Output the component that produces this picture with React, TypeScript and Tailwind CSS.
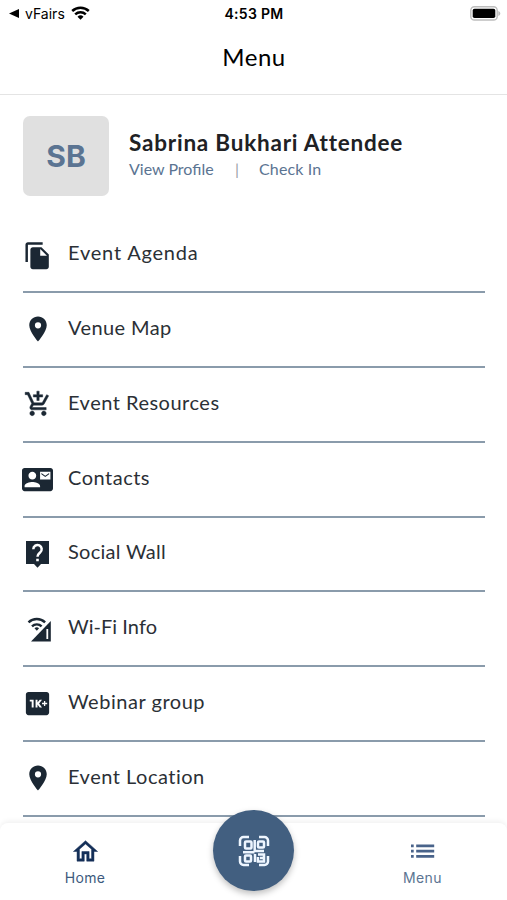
import type { ReactNode } from 'react';
import {
  MdAddShoppingCart,
  MdContactMail,
  MdFileCopy,
  MdLocationOn,
  MdOutlineHome,
  Md1kPlus,
} from 'react-icons/md';

interface MenuItem {
  label: string;
  icon: ReactNode;
  labelClass: string;
}

function HelpIcon() {
  return (
    <svg className="mt-px h-[27px] w-[23px] shrink-0" viewBox="0 0 23 27">
      <path d="M0 0h23v23h-8l-3.5 3.7L8 23H0z" fill="currentColor" />
      <path d="M7.3 8.2a4.2 4.2 0 1 1 6.8 3.3c-1.5 1.2-2.6 1.9-2.6 4.3" fill="none" stroke="#fff" strokeWidth="2.5" />
      <path d="M10.2 17.8h2.6v2.5h-2.6z" fill="#fff" />
    </svg>
  );
}

function CellWifiIcon() {
  return (
    <svg className="mt-[2px] ml-[3px] h-[25px] w-[25px] shrink-0" viewBox="0 0 25 25">
      <path d="M23.8 4v20.5H4z" fill="currentColor" />
      <path d="M20.3 12v10" stroke="#fff" strokeWidth="1.8" />
      <path d="M1.5 5.3a12 12 0 0 1 16.6 0M5 9.3a7 7 0 0 1 9.6 0" fill="none" stroke="currentColor" strokeWidth="2.4" />
      <path d="m9.8 13.7-2.3-2.4a3.4 3.4 0 0 1 4.6 0z" fill="currentColor" />
    </svg>
  );
}

const menuItems: MenuItem[] = [
  { label: 'Event Agenda', icon: <MdFileCopy className="mt-px size-[29.5px] shrink-0" />, labelClass: 'tracking-[0.8px]' },
  { label: 'Venue Map', icon: <MdLocationOn className="-mt-px size-[30px] shrink-0" />, labelClass: 'tracking-[0.4px]' },
  {
    label: 'Event Resources',
    icon: <MdAddShoppingCart className="-mt-px size-[28px] shrink-0 stroke-current stroke-[0.4px] [&>path[fill=none]]:stroke-none" />,
    labelClass: 'tracking-[0.5px]',
  },
  { label: 'Contacts', icon: <MdContactMail className="size-[31px] shrink-0" />, labelClass: 'tracking-[0.5px]' },
  { label: 'Social Wall', icon: <HelpIcon />, labelClass: 'tracking-[0.27px]' },
  { label: 'Wi-Fi Info', icon: <CellWifiIcon />, labelClass: 'tracking-[0.05px]' },
  { label: 'Webinar group', icon: <Md1kPlus className="size-[31px] shrink-0" />, labelClass: 'tracking-[0.53px]' },
  { label: 'Event Location', icon: <MdLocationOn className="size-[30px] shrink-0" />, labelClass: 'tracking-[0.5px]' },
];

function StatusBar() {
  return (
    <div className="grid h-[27px] grid-cols-3 items-center text-black">
      <div className="flex items-center pl-[9px]">
        <svg className="h-[9px] w-[11px]" viewBox="0 0 11 9">
          <path d="M0 4.5 10 0v9z" />
        </svg>
        <span className="ml-[5px] font-[Inter] text-[14px]">vFairs</span>
        <svg className="-mt-[2px] ml-[6px] h-[14px] w-[19px]" viewBox="0 0 19 14" fill="none" stroke="currentColor" strokeWidth="2.5">
          <path d="M1.2 5a12 12 0 0 1 16.6 0M4.2 8.3a7.7 7.7 0 0 1 10.6 0" />
          <path d="M9.5 13.8 6.5 10.8a4.3 4.3 0 0 1 6 0z" fill="currentColor" stroke="none" />
        </svg>
      </div>
      <span className="pl-px text-center font-[Inter] text-[14px] font-semibold tracking-[0.3px]">4:53 PM</span>
      <div className="flex justify-end pr-[6px]">
        <svg className="h-[15px] w-[31px]" viewBox="0 0 31 15">
          <rect x="0.8" y="0.8" width="26.4" height="13.2" rx="3.6" fill="#fff" stroke="#bdbdbd" strokeWidth="1.4" />
          <rect x="2.7" y="2.7" width="22.6" height="9.4" rx="1.8" />
          <path d="M28.3 5v5c1.2-.5 2-1.3 2-2.5s-.8-2-2-2.5z" fill="#bdbdbd" />
        </svg>
      </div>
    </div>
  );
}

function ScanIcon() {
  return (
    <svg className="size-[32px]" viewBox="0 0 32 32" fill="none" stroke="#eef6ff" strokeWidth="2.5">
      <path d="M2 11V5.5A3.5 3.5 0 0 1 5.5 2H11M21 2h5.5A3.5 3.5 0 0 1 30 5.5V11M30 21v5.5a3.5 3.5 0 0 1-3.5 3.5H21M11 30H5.5A3.5 3.5 0 0 1 2 26.5V21" />
      <rect x="7" y="6.5" width="6.5" height="7" rx="1" />
      <rect x="20" y="6.5" width="6" height="6" rx="1" />
      <rect x="7" y="20.5" width="6" height="6" rx="1" />
      <path d="M16.7 5v11M5 17.2h11.5M16 16h10M17 19v8M20 19.5h6v3.5h-4M20 22v4.500h6V24" />
    </svg>
  );
}

function App() {
  return (
    <div className="relative flex h-[900px] w-full flex-col overflow-hidden bg-white font-[Lato,sans-serif]">
      <header className="h-[95px] shrink-0 border-b border-[#e4e4e4]">
        <StatusBar />
        <h1 className="mt-[12px] pl-px text-center text-[24px] leading-9 tracking-[0.5px] text-black">Menu</h1>
      </header>

      {/* Profile */}
      <section className="flex shrink-0 items-start pt-[21px] pl-[23px]">
        <div className="flex h-[80px] w-[86px] items-center justify-center rounded-[7px] bg-[#e0e0e0] font-[Inter] text-[30px] font-bold text-[#5b7492]">
          SB
        </div>
        <div className="ml-5 pt-[12px]">
          <h2 className="text-[22.5px] leading-[30px] font-bold tracking-[0.78px] text-[#202124]">Sabrina Bukhari Attendee</h2>
          <div className="-mt-px flex text-[16px] leading-6 text-[#5b7492]">
            <span className="w-[106px]">View Profile</span>
            <span className="w-[24px] text-[#9aa0a6]">|</span>
            <span className="tracking-[0.15px]">Check In</span>
          </div>
        </div>
      </section>

      {/* Menu list */}
      <ul className="mx-[22.5px] mt-[22.4px] shrink-0">
        {menuItems.map(({ label, icon, labelClass }) => (
          <li key={label} className="flex h-[74.8px] items-center border-b-2 border-[#8a9bab] text-[#1b2733]">
            <span className="flex w-[30px] shrink-0 justify-center">{icon}</span>
            <span className={`-mt-[5px] ml-[15.5px] text-[20px] text-[#2b3036] ${labelClass}`}>{label}</span>
          </li>
        ))}
      </ul>

      {/* Bottom navigation */}
      <nav className="absolute inset-x-0 bottom-0 h-[77px] rounded-t-[8px] bg-white shadow-[0_-2px_5px_rgba(0,0,0,0.06)]">
        <div className="flex justify-between font-[Inter] text-[14px]">
          <div className="flex w-[170px] flex-col items-center pt-[13px] text-[#3d5a7d]">
            <MdOutlineHome className="mt-px size-[29px] stroke-current stroke-[0.4px] text-[#142f58] [&>path[fill=none]]:stroke-none" />
            <span className="mt-[2px] leading-5 tracking-[0.3px]">Home</span>
          </div>
          <div className="flex w-[170px] flex-col items-center pt-[13px] text-[#5b7492]">
            <svg className="mt-px size-[29px]" viewBox="0 0 29 29" fill="#49638a">
              <path d="M3 7.5h2.7v2.7H3zM3 12.8h2.7v2.7H3zM3 18.1h2.7v2.7H3zM8.2 7.5h18v2.7h-18zM8.2 12.8h18v2.7h-18zM8.2 18.1h18v2.7h-18z" />
            </svg>
            <span className="mt-[2px] ml-px leading-5 tracking-[0.4px]">Menu</span>
          </div>
        </div>
        <button className="absolute top-[-13px] left-[213px] flex size-[81px] items-center justify-center rounded-full bg-[#425f80] shadow-[0_3px_6px_rgba(0,0,0,0.25)]">
          <ScanIcon />
        </button>
      </nav>
    </div>
  );
}

export default App;
